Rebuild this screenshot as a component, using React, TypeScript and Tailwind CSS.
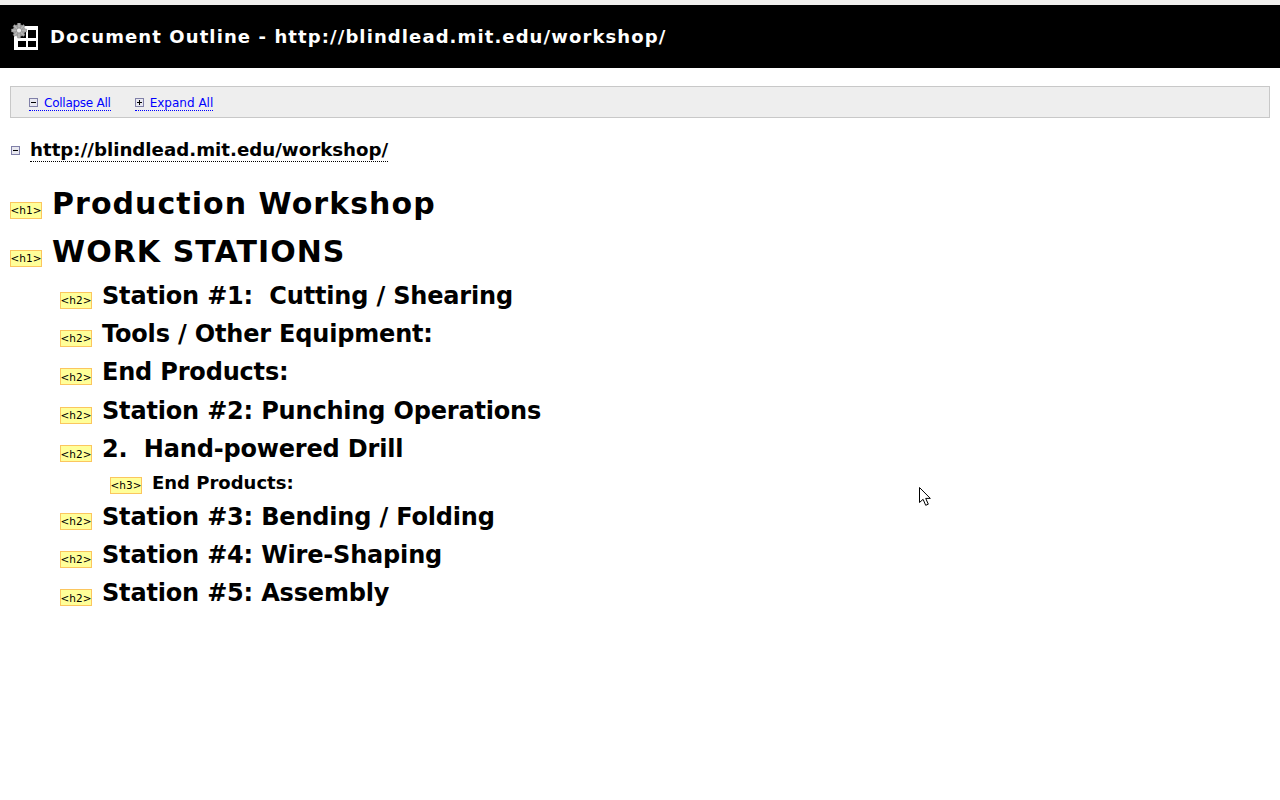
const font = "font-['DejaVu_Sans',sans-serif]";

type Item = { tag: "h1" | "h2" | "h3"; text: string };

const items: Item[] = [
  { tag: "h1", text: "Production Workshop" },
  { tag: "h1", text: "WORK STATIONS" },
  { tag: "h2", text: "Station #1:  Cutting / Shearing" },
  { tag: "h2", text: "Tools / Other Equipment:" },
  { tag: "h2", text: "End Products:" },
  { tag: "h2", text: "Station #2: Punching Operations" },
  { tag: "h2", text: "2.  Hand-powered Drill" },
  { tag: "h3", text: "End Products:" },
  { tag: "h2", text: "Station #3: Bending / Folding" },
  { tag: "h2", text: "Station #4: Wire-Shaping" },
  { tag: "h2", text: "Station #5: Assembly" },
];

const Box = ({ plus }: { plus?: boolean }) => (
  <svg width="9" height="9" viewBox="0 0 9 9" className="shrink-0">
    <rect x="0.5" y="0.5" width="8" height="8" fill="#e8e8f0" stroke="#8080a8" />
    <path d={plus ? "M2 4.5h5M4.5 2v5" : "M2 4.5h5"} stroke="#000" />
  </svg>
);

const Logo = () => (
  <svg width="28" height="28" viewBox="0 0 28 28" className="shrink-0">
    <path fill="#fff" d="M3 3h24v24H3z" />
    <path fill="#000" d="M7 18h8v6H7zM17 18h8v6h-8zM17 7h8v8h-8zM7 7h8v8H7z" />
    <g fill="#b4b4b4" stroke="#808080" strokeWidth="0.5">
      <circle cx="8" cy="7.5" r="6" />
      <path d="M6.6 0h2.8v15h-2.8zM0.5 6.1h15v2.8h-15z" />
      <path d="M2 3.2l1.7-1.7 10.3 10.3-1.7 1.7zM12.3 1.5l1.7 1.7-10.3 10.3-1.7-1.7z" />
    </g>
    <circle cx="8" cy="7.5" r="2.5" fill="#eee" stroke="#666" strokeWidth="0.5" />
  </svg>
);

const Cursor = () => (
  <svg width="14" height="21" viewBox="0 0 14 21" className="absolute left-[918px] top-[486px]">
    <path d="M1.5 1.5v15l3.6-3.2 2.6 6 2.6-1.1-2.6-5.8h4.6z" fill="#fff" stroke="#000" strokeWidth="1" />
  </svg>
);

const Tag = ({ tag }: { tag: string }) => (
  <span className={`flex h-[17px] w-[32px] shrink-0 items-center justify-center border border-[#fbc65f] bg-[#ffff99] text-[10.5px] leading-none text-black ${tag === "h1" ? "mt-[14px]" : tag === "h2" ? "mt-[12px]" : "mt-[8px]"}`}>
    {`<${tag}>`}
  </span>
);

const Row = ({ tag, text }: Item) => {
  if (tag === "h1") {
    return (
      <div className="flex h-[48px] items-center pl-[10px]">
        <Tag tag={tag} />
        <span className="ml-[10px] whitespace-pre text-[30px] font-bold tracking-[1.05px] text-black">{text}</span>
      </div>
    );
  }
  if (tag === "h2") {
    return (
      <div className="flex h-[38.4px] items-center pl-[60px]">
        <Tag tag={tag} />
        <span className="ml-[10px] whitespace-pre pt-[3px] text-[24px] tracking-[-0.18px] font-bold text-black">{text}</span>
      </div>
    );
  }
  return (
    <div className="flex h-[29px] items-center pl-[110px]">
      <Tag tag={tag} />
      <span className="ml-[10px] whitespace-pre pt-[2px] text-[18px] font-bold text-black">{text}</span>
    </div>
  );
};

export default function App() {
  return (
    <div className={`relative h-[800px] w-[1280px] overflow-hidden bg-white ${font}`}>
      <div className="h-[5px] bg-[#f0efed]" />
      <div className="flex h-[63px] items-center gap-[11px] bg-black pl-[11px]">
        <Logo />
        <span className="text-[18px] font-bold tracking-[1.1px] text-white">
          Document Outline - http://blindlead.mit.edu/workshop/
        </span>
      </div>
      <div className="mx-[10px] mt-[18px] flex h-[32px] items-center gap-[24px] border border-[#c8c8c8] bg-[#eeeeee] pl-[18px] pt-[2px] text-[12px] text-[#0000ff]">
        <span className="flex items-center gap-[6px] border-b border-dotted border-[#0000ff] leading-[14px] tracking-[-0.25px]">
          <Box />
          Collapse All
        </span>
        <span className="flex items-center gap-[6px] border-b border-dotted border-[#0000ff] leading-[14px]">
          <Box plus />
          Expand All
        </span>
      </div>
      <div className="mt-[20px] flex items-center pl-[11px]">
        <Box />
        <span className="ml-[10px] border-b border-dotted border-black text-[18.2px] font-bold leading-[23px] text-black">
          http://blindlead.mit.edu/workshop/
        </span>
      </div>
      <div className="mt-[17px]">
        {items.map((item, i) => (
          <Row key={i} {...item} />
        ))}
      </div>
      <Cursor />
    </div>
  );
}
